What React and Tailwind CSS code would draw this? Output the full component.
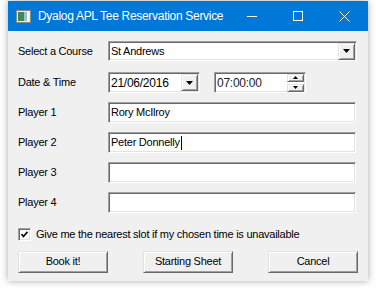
import React from 'react'

// Classic Win32-looking dialog: sunken fields, raised buttons
const sunken =
  'bg-white border border-t-[#a0a0a0] border-l-[#a0a0a0] border-b-white border-r-white shadow-[inset_1px_1px_0_#696969,inset_-1px_-1px_0_#e3e3e3]'
const raised =
  'bg-[#f0f0f0] border border-t-[#e3e3e3] border-l-[#e3e3e3] border-b-[#696969] border-r-[#696969] shadow-[inset_1px_1px_0_#ffffff,inset_-1px_-1px_0_#a0a0a0]'

function Arrow() {
  return (
    <svg width="7" height="4" viewBox="0 0 7 4">
      <path d="M0 0 L7 0 L3.5 4 Z" fill="#000" />
    </svg>
  )
}

function DropButton() {
  return (
    <div className={`${raised} w-[17px] h-[17px] flex items-center justify-center shrink-0`}>
      <Arrow />
    </div>
  )
}

function Row({ label, children, className = '' }) {
  return (
    <div className={`flex items-center ${className}`}>
      <div className="w-[90px] shrink-0">{label}</div>
      {children}
    </div>
  )
}

function TextBox({ value, caret }) {
  return (
    <div className={`${sunken} w-[248px] h-[21px] flex items-center pl-[2px]`}>
      {value}
      {caret && <span className="inline-block w-px h-[14px] bg-black ml-px" />}
    </div>
  )
}

function Button({ children, isDefault }) {
  return (
    <div
      className={`${raised} w-[90px] h-[22px] flex items-center justify-center ${
        isDefault ? 'border-[#696969] border-t-[#8a8a8a] border-l-[#8a8a8a]' : ''
      }`}
    >
      {children}
    </div>
  )
}

export default function App() {
  return (
    <div className="w-[376px] h-[289px] bg-white overflow-hidden" style={{ fontFamily: '"Liberation Sans", Arial, sans-serif' }}>
      <div className="ml-[8px] mt-[1px] w-[360px] h-[280px] bg-[#f0f0f0] shadow-[0_0_7px_rgba(0,0,0,0.35)] flex flex-col text-[11px] tracking-[-0.25px] text-black">
        {/* title bar */}
        <div className="h-[30px] bg-[#0078d7] flex items-center text-white shrink-0">
          <svg className="ml-[8px] shrink-0" width="15" height="13" viewBox="0 0 15 13">
            <rect x="0.5" y="0.5" width="14" height="12" fill="#e8e8e8" stroke="#8a8a8a" />
            <rect x="2" y="2" width="6" height="9" fill="#3a8a5a" />
            <rect x="8" y="2" width="3" height="9" fill="#9cc0d8" />
            <rect x="11" y="2" width="2" height="9" fill="#ffffff" />
          </svg>
          <span className="ml-[7px] text-[12px] tracking-[-0.3px] whitespace-nowrap">Dyalog APL Tee Reservation Service</span>
          <div className="ml-auto flex items-center h-full shrink-0 pr-[1px]">
            <div className="w-[46px] h-full flex items-center justify-center">
              <div className="w-[10px] h-px bg-white" />
            </div>
            <div className="w-[46px] h-full flex items-center justify-center">
              <div className="w-[10px] h-[10px] border border-white" />
            </div>
            <div className="w-[46px] h-full flex items-center justify-center">
              <svg width="11" height="11" viewBox="0 0 11 11">
                <path d="M0.5 0.5 L10.5 10.5 M10.5 0.5 L0.5 10.5" stroke="#fff" strokeWidth="1" />
              </svg>
            </div>
          </div>
        </div>

        {/* client area */}
        <div className="flex flex-col pl-[10px] pr-[11px]">
          <Row label="Select a Course" className="mt-[10px]">
            <div className={`${sunken} w-[249px] h-[20px] flex items-center pl-[2px] pr-[1px]`}>
              <span className="flex-1">St Andrews</span>
              <DropButton />
            </div>
          </Row>

          <Row label="Date & Time" className="mt-[11px]">
            <div className={`${sunken} w-[92px] h-[21px] flex items-center pl-[2px] pr-[1px]`}>
              <span className="flex-1 text-[12px]">21/06/2016</span>
              <DropButton />
            </div>
            <div className={`${sunken} ml-[14px] w-[92px] h-[21px] flex items-center pl-[2px] pr-[1px]`}>
              <span className="flex-1 text-[12px] text-[#1a1a2a]">07:00:00</span>
              <div className="flex flex-col gap-[2px]">
                <div className={`${raised} w-[17px] h-[8px] flex items-center justify-center`}>
                  <svg width="5" height="3" viewBox="0 0 5 3"><path d="M2.5 0 L5 3 L0 3 Z" fill="#000" /></svg>
                </div>
                <div className={`${raised} w-[17px] h-[8px] flex items-center justify-center`}>
                  <svg width="5" height="3" viewBox="0 0 5 3"><path d="M0 0 L5 0 L2.5 3 Z" fill="#000" /></svg>
                </div>
              </div>
            </div>
          </Row>

          <Row label="Player 1" className="mt-[9px]">
            <TextBox value="Rory McIlroy" />
          </Row>
          <Row label="Player 2" className="mt-[9px]">
            <TextBox value="Peter Donnelly" caret />
          </Row>
          <Row label="Player 3" className="mt-[9px]">
            <TextBox value="" />
          </Row>
          <Row label="Player 4" className="mt-[9px]">
            <TextBox value="" />
          </Row>

          <div className="flex items-center mt-[13px]">
            <div className={`${sunken} w-[13px] h-[13px] flex items-center justify-center`}>
              <svg width="7" height="7" viewBox="0 0 7 7">
                <path d="M0.5 3 L2.5 5.5 L6.5 0.8" stroke="#000" strokeWidth="1.6" fill="none" />
              </svg>
            </div>
            <span className="ml-[5px]">Give me the nearest slot if my chosen time is unavailable</span>
          </div>

          <div className="flex justify-between mt-[8px] w-[340px]">
            <Button isDefault>Book it!</Button>
            <Button>Starting Sheet</Button>
            <Button>Cancel</Button>
          </div>
        </div>
      </div>
    </div>
  )
}
